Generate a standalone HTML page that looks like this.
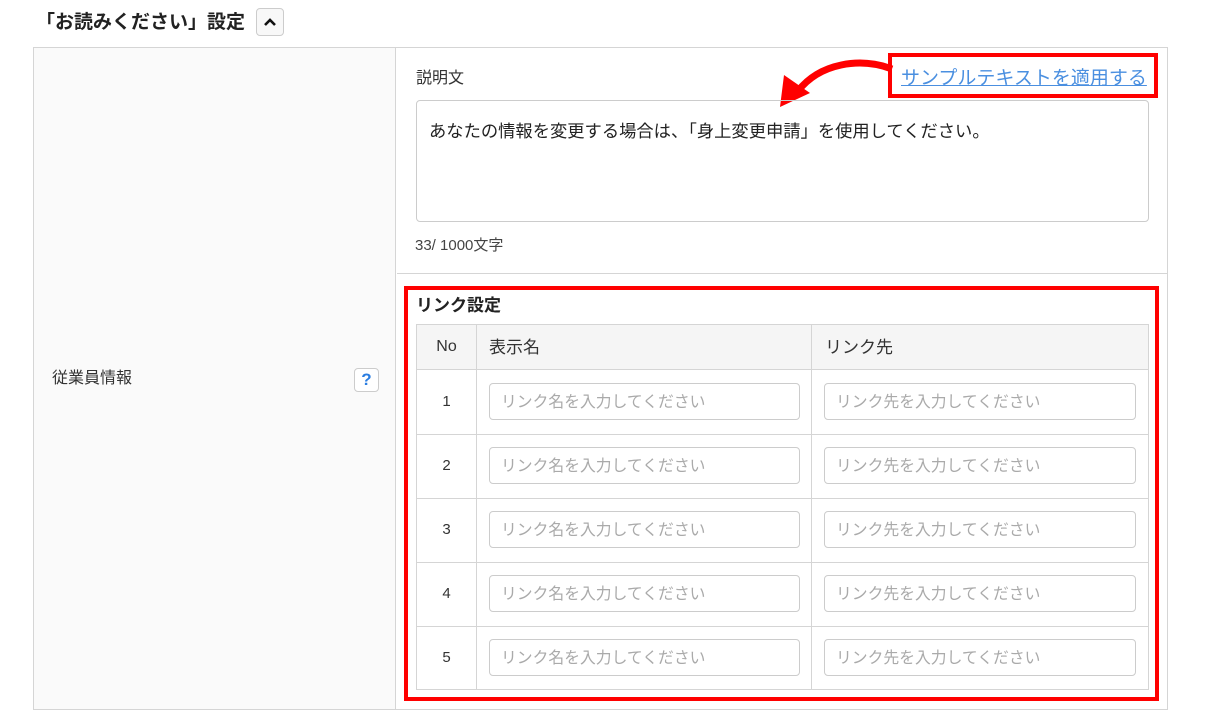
<!DOCTYPE html>
<html><head><meta charset="utf-8"><style>
*{box-sizing:border-box;margin:0;padding:0}
body{width:1210px;height:720px;background:#fff;font-family:"Liberation Sans","Noto Sans CJK JP",sans-serif;color:#333;position:relative;overflow:hidden}
.abs{position:absolute}
.inp{position:absolute;height:37px;border:1px solid #ccc;border-radius:4px;font-size:15.8px;color:#aaa;padding:1px 11px 0;line-height:35px;background:#fff;white-space:nowrap}
.num{position:absolute;width:61px;text-align:center;font-size:15px;color:#333;line-height:20px}
</style></head><body>
<div class="abs" style="left:36px;top:10px;font-size:19px;font-weight:bold;color:#222;line-height:26px">「お読みください」設定</div>
<div class="abs" style="left:256px;top:8px;width:28px;height:28px;border:1px solid #ccc;border-radius:4px;background:#f8f8f8">
<svg width="26" height="26" style="position:absolute;left:0;top:0"><path d="M8 16 L13 11 L18 16" stroke="#111" stroke-width="2.6" fill="none"/></svg></div>
<div class="abs" style="left:33px;top:47px;width:1135px;height:663px;border:1px solid #d5d5d5"></div>
<div class="abs" style="left:34px;top:48px;width:362px;height:661px;background:#fafafa;border-right:1px solid #d5d5d5"></div>
<div class="abs" style="left:52px;top:369px;font-size:16px;line-height:20px">従業員情報</div>
<div class="abs" style="left:354px;top:368px;width:25px;height:24px;border:1px solid #ccc;border-radius:4px;background:#fff;color:#2a7de1;font-weight:bold;font-size:17px;text-align:center;line-height:22px">?</div>
<div class="abs" style="left:416px;top:69px;font-size:16px;line-height:20px">説明文</div>
<div class="abs" style="left:888px;top:53px;width:270px;height:45px;border:4px solid #f00"></div>
<div class="abs" style="left:901px;top:66px;font-size:19px;line-height:26px;color:#4a8fe0;text-decoration:underline;white-space:nowrap">サンプルテキストを適用する</div>
<svg class="abs" style="left:770px;top:55px" width="125" height="60"><path d="M122 14 C90 2 50 8 28 36" stroke="#f00" stroke-width="7" fill="none"/><path d="M10 52 L14 20 L40 38 Z" fill="#f00"/></svg>
<div class="abs" style="left:416px;top:100px;width:733px;height:122px;border:1px solid #ccc;border-radius:4px;padding:16px 12px;font-size:17.3px;color:#222;white-space:nowrap">あなたの情報を変更する場合は、「身上変更申請」を使用してください。</div>
<div class="abs" style="left:415px;top:234px;font-size:15px;color:#444">33/ 1000文字</div>
<div class="abs" style="left:397px;top:273px;width:770px;height:1px;background:#d5d5d5"></div>
<div class="abs" style="left:404px;top:286px;width:755px;height:415px;border:4px solid #f00"></div>
<div class="abs" style="left:416px;top:295px;font-size:17px;font-weight:bold;color:#222;line-height:22px">リンク設定</div>
<div class="abs" style="left:416px;top:324px;width:733px;height:366px;border:1px solid #d5d5d5"></div>
<div class="abs" style="left:417px;top:325px;width:731px;height:45px;background:#f5f5f5;border-bottom:1px solid #d5d5d5"></div>
<div class="abs" style="left:476px;top:325px;width:1px;height:364px;background:#d5d5d5"></div>
<div class="abs" style="left:811px;top:325px;width:1px;height:364px;background:#d5d5d5"></div>
<div class="num" style="left:416px;top:337px;font-size:16px">No</div>
<div class="abs" style="left:489px;top:337px;font-size:17px;line-height:22px">表示名</div>
<div class="abs" style="left:825px;top:337px;font-size:17px;line-height:22px">リンク先</div>
<div class="abs" style="left:417px;top:434px;width:731px;height:1px;background:#d5d5d5"></div>
<div class="abs" style="left:417px;top:498px;width:731px;height:1px;background:#d5d5d5"></div>
<div class="abs" style="left:417px;top:562px;width:731px;height:1px;background:#d5d5d5"></div>
<div class="abs" style="left:417px;top:626px;width:731px;height:1px;background:#d5d5d5"></div>
<div class="num" style="left:416px;top:392px">1</div>
<div class="inp" style="left:489px;top:383px;width:311px">リンク名を入力してください</div>
<div class="inp" style="left:824px;top:383px;width:312px">リンク先を入力してください</div>
<div class="num" style="left:416px;top:456px">2</div>
<div class="inp" style="left:489px;top:447px;width:311px">リンク名を入力してください</div>
<div class="inp" style="left:824px;top:447px;width:312px">リンク先を入力してください</div>
<div class="num" style="left:416px;top:520px">3</div>
<div class="inp" style="left:489px;top:511px;width:311px">リンク名を入力してください</div>
<div class="inp" style="left:824px;top:511px;width:312px">リンク先を入力してください</div>
<div class="num" style="left:416px;top:584px">4</div>
<div class="inp" style="left:489px;top:575px;width:311px">リンク名を入力してください</div>
<div class="inp" style="left:824px;top:575px;width:312px">リンク先を入力してください</div>
<div class="num" style="left:416px;top:648px">5</div>
<div class="inp" style="left:489px;top:639px;width:311px">リンク名を入力してください</div>
<div class="inp" style="left:824px;top:639px;width:312px">リンク先を入力してください</div>
</body></html>
